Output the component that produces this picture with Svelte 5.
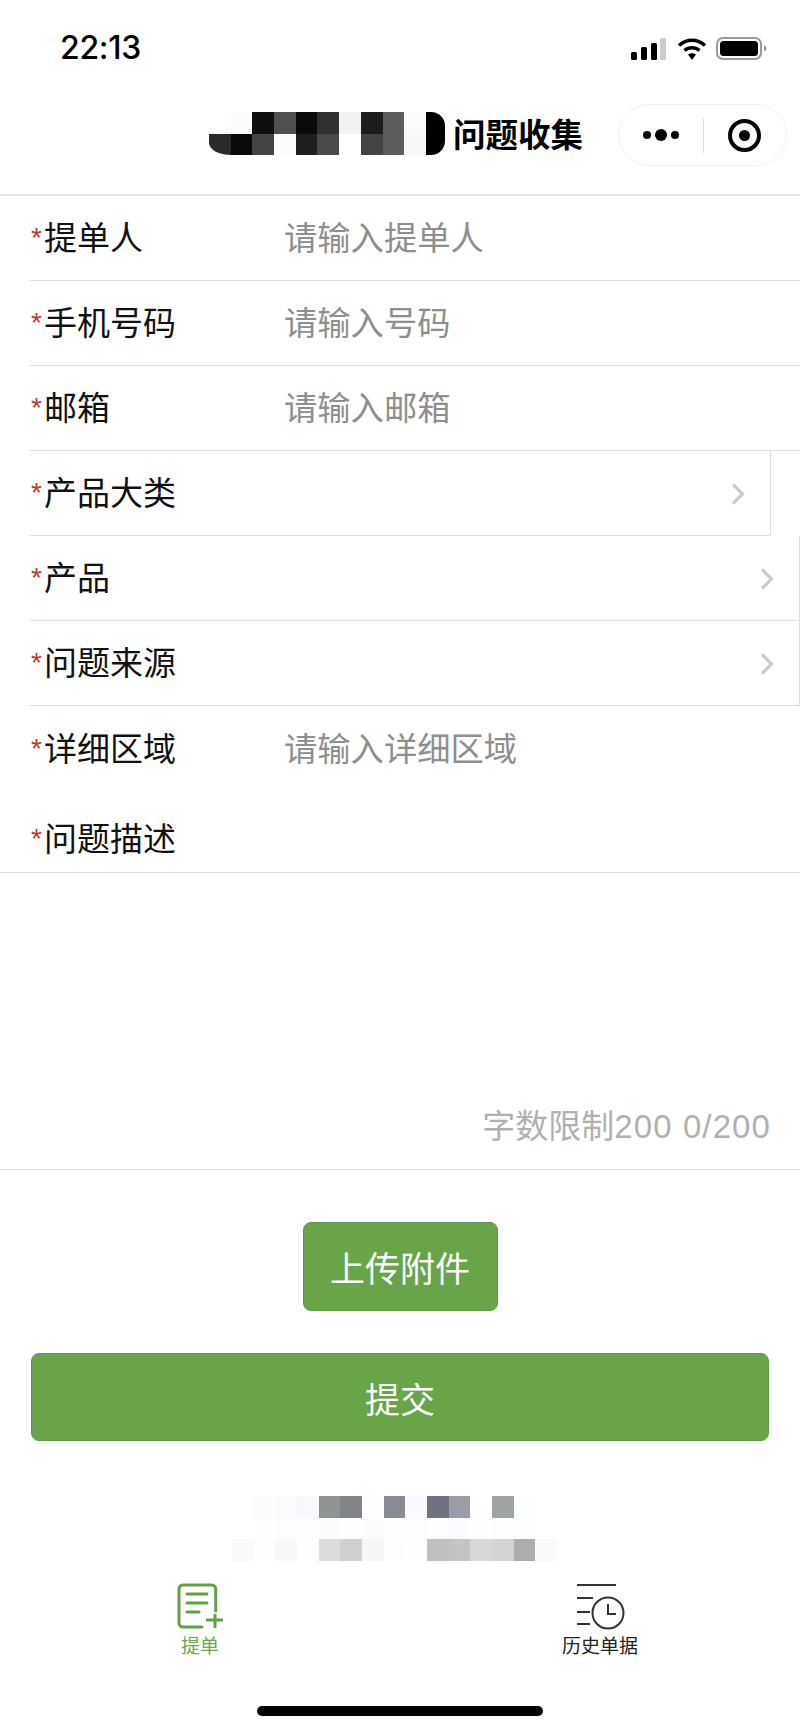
<script>
  const fields = [
    { label: '提单人', placeholder: '请输入提单人' },
    { label: '手机号码', placeholder: '请输入号码' },
    { label: '邮箱', placeholder: '请输入邮箱' },
    { label: '产品大类', select: true, inset: true },
    { label: '产品', select: true },
    { label: '问题来源', select: true },
    { label: '详细区域', placeholder: '请输入详细区域', plain: true }
  ]

  // blurred-out parts of the screenshot
  const titleBlur = [
    '#fff', '#fcfcfc', '#0f0f0f', '#505050', '#0a0a0a', '#303030', '#f2f2f2', '#1c1c1c', '#5c5c5c', '#fbfbfb', '#000',
    '#2a2a2a', '#0a0a0a', '#444', '#fcfcfc', '#1e1e1e', '#4a4a4a', '#fff', '#444', '#5c5c5c', '#f8f8f8', '#000'
  ]
  const footerBlur = [
    '#fff', '#fdfbfe', '#fbfbff', '#f8f8ff', '#8f9394', '#7f8489', '#fdfdff', '#888b94', '#f9faff', '#6f7280', '#9a9da8', '#fff', '#a0a3a3', '#fbffff', '#fff',
    '#fff', '#fefefe', '#fdfdfd', '#fdfdfd', '#fcfcfc', '#fefefe', '#fcfcfc', '#fdfdff', '#fdfdff', '#fefefe', '#fcfcff', '#fefefe', '#fdfdff', '#fdfdff', '#fff',
    '#fafafa', '#fefefe', '#f8f8f8', '#fefefe', '#dcdcdc', '#d0d0d0', '#f6f6f6', '#fdfdfd', '#fefefe', '#bfbfbf', '#c4c4c4', '#d8d8d8', '#d4d4d4', '#adadad', '#fafafa'
  ]
</script>

<div class="page">
  <div class="status">
    <span class="time">22:13</span>
    <div class="status-icons">
      <svg width="38" height="24" viewBox="0 0 38 24">
        <rect x="1" y="15" width="6" height="8" rx="1.5" fill="#000" />
        <rect x="11" y="10" width="6" height="13" rx="1.5" fill="#000" />
        <rect x="21" y="6" width="6" height="17" rx="1.5" fill="#000" />
        <rect x="30" y="1" width="6" height="22" rx="1.5" fill="#ccc" />
      </svg>
      <svg width="30" height="24" viewBox="0 0 30 24">
        <path d="M2 8.500C9.500 1.500 20.500 1.500 28 8.500" fill="none" stroke="#000" stroke-width="3.600" />
        <path d="M7.500 13.500C11.800 9.800 18.200 9.800 22.500 13.500" fill="none" stroke="#000" stroke-width="3.400" />
        <path d="M11 17.500C13.500 15.700 16.500 15.700 19 17.500L15 23Z" fill="#000" />
      </svg>
      <svg width="52" height="24" viewBox="0 0 52 24">
        <rect x="1" y="1" width="44" height="21" rx="6" fill="none" stroke="#999" stroke-width="2" />
        <rect x="4" y="4" width="38" height="15" rx="3.500" fill="#000" />
        <path d="M48 8.500C50 9.500 50.500 10.500 50.500 11.500C50.500 12.500 50 13.500 48 14.500Z" fill="#999" />
      </svg>
    </div>
  </div>

  <div class="nav">
    <div class="title-blur">
      {#each titleBlur as color}
        <i style="background: {color}"></i>
      {/each}
    </div>
    <span class="title">问题收集</span>
    <div class="capsule">
      <div class="dots"><b></b><b class="big"></b><b></b></div>
      <span class="capsule-line"></span>
      <div class="ring"></div>
    </div>
  </div>

  <div class="form">
    {#each fields as field}
      <div class="row" class:plain={field.plain} class:edge={field.select} class:inset={field.inset}>
        <span class="label"><em>*</em>{field.label}</span>
        {#if field.select}
          <svg class="chevron" width="14" height="22" viewBox="0 0 14 22">
            <path d="M2 1.500L11.500 11L2 20.500" fill="none" stroke="#cbcbcb" stroke-width="3.200" />
          </svg>
        {:else}
          <span class="placeholder">{field.placeholder}</span>
        {/if}
      </div>
    {/each}
  </div>

  <div class="describe">
    <span class="label"><em>*</em>问题描述</span>
  </div>
  <div class="textarea">
    <span class="count">字数限制<span class="digits">200 0/200</span></span>
  </div>

  <div class="actions">
    <button class="btn upload">上传附件</button>
    <button class="btn submit">提交</button>
  </div>

  <div class="footer-blur">
    {#each footerBlur as color}
      <i style="background: {color}"></i>
    {/each}
  </div>

  <div class="tabs">
    <div class="tab active">
      <svg width="48" height="48" viewBox="0 0 48 48">
        <g fill="none" stroke="#62a047" stroke-width="3" stroke-linecap="round">
          <path d="M39.700 28V6a4 4 0 0 0-4-4H7a4 4 0 0 0-4 4V40a4 4 0 0 0 4 4H26" />
          <path d="M11 11H31M11 20H31M11 29H23" />
          <path d="M30 37H47M39 31V45" stroke-linecap="butt" stroke-width="3" />
        </g>
      </svg>
      <span>提单</span>
    </div>
    <div class="tab">
      <svg width="50" height="48" viewBox="0 0 50 48">
        <g fill="none" stroke="#333" stroke-width="2">
          <path d="M2 2H41M2 15H18M2 29H15M2 41H15" />
          <circle cx="33" cy="30" r="15.500" />
          <path d="M33 21V31H41" />
        </g>
      </svg>
      <span>历史单据</span>
    </div>
  </div>

  <div class="home-bar"></div>
</div>

<style>
  :global(body) {
    margin: 0;
    background: #fff;
  }

  .page {
    width: 800px;
    height: 1731px;
    overflow: hidden;
    background: #fff;
    color: #111;
    font-family: "Liberation Sans", "Noto Sans CJK SC", sans-serif;
  }

  .status {
    height: 94px;
    display: flex;
    align-items: center;
    justify-content: space-between;
    padding: 0 32px 0 60px;
  }

  .time {
    font-family: Inter, sans-serif;
    font-size: 32px;
    font-weight: 500;
    letter-spacing: -0.3px;
    color: #000;
  }

  .status-icons {
    display: flex;
    align-items: center;
    gap: 9px;
    padding-top: 3px;
  }

  .nav {
    height: 102px;
    box-sizing: border-box;
    display: flex;
    align-items: flex-start;
    padding: 10px 13px 0 209px;
    border-bottom: 2px solid #e4e4e4;
  }

  .title-blur {
    display: grid;
    grid-template-columns: repeat(10, 21.700px) 19px;
    grid-auto-rows: 21.500px;
    margin-top: 8px;
    flex: none;
  }

  .title-blur i:nth-child(11) {
    border-top-right-radius: 14px;
  }

  .title-blur i:nth-child(12) {
    border-bottom-left-radius: 22px 12px;
  }

  .title-blur i:nth-child(22) {
    border-bottom-right-radius: 14px;
  }

  .title {
    margin: 10px 0 0 8px;
    font-size: 32.500px;
    line-height: 44px;
    font-weight: 700;
    white-space: nowrap;
    color: #000;
  }

  .capsule {
    margin-left: auto;
    width: 169px;
    height: 62px;
    box-sizing: border-box;
    border: 1px solid #f0f0f0;
    border-radius: 31px;
    display: flex;
    align-items: center;
    flex: none;
  }

  .dots {
    width: 84px;
    display: flex;
    align-items: center;
    justify-content: center;
    gap: 4px;
  }

  .dots b {
    width: 8px;
    height: 8px;
    border-radius: 50%;
    background: #000;
  }

  .dots b.big {
    width: 12px;
    height: 12px;
  }

  .capsule-line {
    width: 1px;
    height: 35px;
    background: #ddd;
  }

  .ring {
    width: 33px;
    height: 33px;
    box-sizing: border-box;
    margin-left: 24px;
    border: 4px solid #000;
    border-radius: 50%;
    display: flex;
    align-items: center;
    justify-content: center;
  }

  .ring::after {
    content: '';
    width: 11px;
    height: 11px;
    border-radius: 50%;
    background: #000;
  }

  .row {
    height: 85px;
    box-sizing: border-box;
    margin-left: 29px;
    padding-top: 2px;
    display: flex;
    align-items: center;
    border-bottom: 1px solid #ddd;
  }

  .row.plain {
    border-bottom: none;
  }

  .row.edge {
    justify-content: space-between;
    border-right: 1px solid #ddd;
    padding-right: 25px;
  }

  .row.inset {
    margin-right: 29px;
  }

  .label {
    width: 255px;
    flex: none;
    font-size: 33px;
    line-height: 44px;
    color: #111;
  }

  .label em {
    display: inline-block;
    width: 15px;
    font-style: normal;
    font-size: 28px;
    color: #c0392b;
    vertical-align: 3px;
    line-height: 20px;
    text-indent: 2px;
  }

  .placeholder {
    font-size: 33.300px;
    line-height: 44px;
    color: #8e8e8e;
  }

  .chevron {
    flex: none;
  }

  .describe {
    height: 82px;
    box-sizing: border-box;
    padding: 27px 0 0 29px;
    border-bottom: 1px solid #ddd;
  }

  .textarea {
    height: 297px;
    box-sizing: border-box;
    display: flex;
    align-items: flex-end;
    justify-content: flex-end;
    padding: 0 29px 20px 0;
    border-bottom: 1px solid #ddd;
  }

  .count {
    font-size: 33px;
    line-height: 44px;
    color: #b0b0b0;
  }

  .digits {
    letter-spacing: 1.100px;
  }

  .actions {
    display: flex;
    flex-direction: column;
    align-items: center;
    gap: 42px;
    padding-top: 52px;
  }

  .btn {
    box-sizing: border-box;
    border: 1px solid #5c9a45;
    border-radius: 8px;
    background: #68a549;
    color: #fff;
    font-family: inherit;
    font-size: 35px;
    padding: 0;
  }

  .upload {
    width: 195px;
    height: 89px;
  }

  .submit {
    width: 738px;
    height: 88px;
  }

  .footer-blur {
    width: 325px;
    margin: 55px 0 0 232px;
    display: grid;
    grid-template-columns: repeat(15, 21.670px);
    grid-auto-rows: 21.670px;
  }

  .tabs {
    display: grid;
    grid-template-columns: 1fr 1fr;
    margin-top: 22px;
  }

  .tab {
    display: flex;
    flex-direction: column;
    align-items: center;
    font-size: 19px;
    line-height: 24px;
    color: #222;
  }

  .tab svg {
    display: block;
  }

  .tab span {
    margin-top: 4px;
  }

  .tab.active {
    color: #6aa84f;
  }

  .home-bar {
    width: 286px;
    height: 10px;
    margin: 47px auto 0;
    border-radius: 5px;
    background: #000;
  }
</style>
